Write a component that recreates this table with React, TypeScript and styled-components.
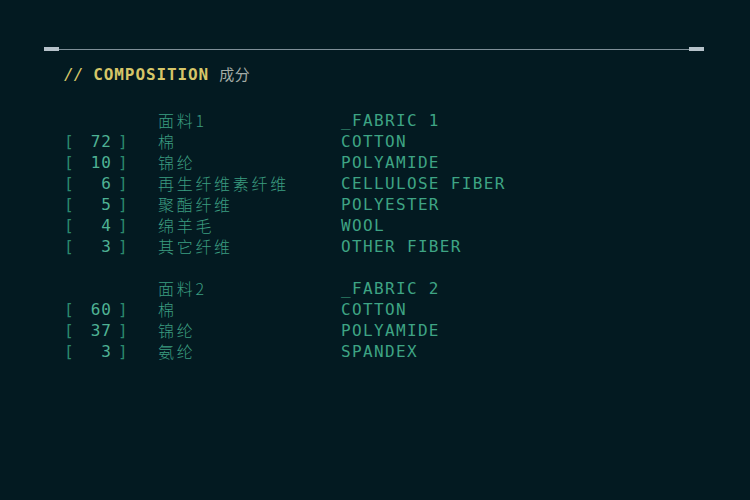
import React from "react";
import styled, { createGlobalStyle } from "styled-components";

const Global = createGlobalStyle`
  html, body { margin: 0; padding: 0; background: #031a21; }
  body { width: 750px; height: 500px; overflow: hidden; }
`;

const Page = styled.div`
  width: 750px;
  height: 500px;
  box-sizing: border-box;
  padding: 47px 46px 0 44px;
  background: #031a21;
`;

const Rule = styled.div`
  display: flex;
  align-items: center;
  height: 4px;
`;

const Cap = styled.div`
  width: 15px;
  height: 4px;
  background: #b6c2ca;
`;

const Line = styled.div`
  flex: 1;
  height: 1px;
  background: #7f8f98;
`;

const Title = styled.div`
  margin-top: 13px;
  padding-left: 20px;
  display: flex;
  align-items: baseline;
  height: 20px;
  line-height: 20px;
  font-family: "DejaVu Sans Mono", monospace;
  font-weight: bold;
  font-size: 16px;
  letter-spacing: 0.9px;
  color: #d6c668;
`;

const Slashes = styled.span`
  margin-right: 10px;
  letter-spacing: 0px;
  font-weight: normal;
  font-style: italic;
`;

const TitleCn = styled.span`
  margin-left: 10px;
  font-family: "Noto Sans CJK SC", sans-serif;
  font-weight: 400;
  font-size: 15px;
  letter-spacing: 0.5px;
  color: #a4aca6;
`;

const Table = styled.div`
  margin-top: 26px;
  padding-left: 20px;
  display: flex;
  flex-direction: column;
  gap: 21px;
`;

const Group = styled.div`
  display: grid;
  grid-template-columns: 94px 183px 1fr;
  grid-auto-rows: 21px;
  align-items: center;
`;

const Pct = styled.div`
  display: flex;
  align-items: center;
  font-family: "DejaVu Sans Mono", monospace;
  font-size: 16px;
  line-height: 21px;
`;

const Bracket = styled.span`
  color: #2b8a6e;
  width: 10px;
`;

const Num = styled.span`
  width: 36px;
  margin-left: 2px;
  margin-right: 6px;
  text-align: right;
  letter-spacing: 1px;
  color: #4fb294;
`;

const Cn = styled.div`
  font-family: "Noto Sans CJK SC", sans-serif;
  font-weight: 300;
  font-size: 16px;
  letter-spacing: 2.7px;
  line-height: 21px;
  height: 21px;
  color: #3b9d80;
`;

const En = styled.div`
  font-family: "DejaVu Sans Mono", monospace;
  font-size: 16px;
  letter-spacing: 1.35px;
  line-height: 21px;
  color: #3ea484;
`;

type Item = { pct: number; cn: string; en: string };
type Fabric = { cn: string; en: string; items: Item[] };

const fabrics: Fabric[] = [
  {
    cn: "面料1",
    en: "_FABRIC 1",
    items: [
      { pct: 72, cn: "棉", en: "COTTON" },
      { pct: 10, cn: "锦纶", en: "POLYAMIDE" },
      { pct: 6, cn: "再生纤维素纤维", en: "CELLULOSE FIBER" },
      { pct: 5, cn: "聚酯纤维", en: "POLYESTER" },
      { pct: 4, cn: "绵羊毛", en: "WOOL" },
      { pct: 3, cn: "其它纤维", en: "OTHER FIBER" },
    ],
  },
  {
    cn: "面料2",
    en: "_FABRIC 2",
    items: [
      { pct: 60, cn: "棉", en: "COTTON" },
      { pct: 37, cn: "锦纶", en: "POLYAMIDE" },
      { pct: 3, cn: "氨纶", en: "SPANDEX" },
    ],
  },
];

export default function App() {
  return (
    <Page>
      <Global />
      <Rule>
        <Cap />
        <Line />
        <Cap />
      </Rule>
      <Title>
        <Slashes>//</Slashes>
        COMPOSITION
        <TitleCn>成分</TitleCn>
      </Title>
      <Table>
        {fabrics.map((f) => (
          <Group key={f.en}>
            <div />
            <Cn>{f.cn}</Cn>
            <En>{f.en}</En>
            {f.items.map((it) => (
              <React.Fragment key={it.en}>
                <Pct>
                  <Bracket>[</Bracket>
                  <Num>{it.pct}</Num>
                  <Bracket>]</Bracket>
                </Pct>
                <Cn>{it.cn}</Cn>
                <En>{it.en}</En>
              </React.Fragment>
            ))}
          </Group>
        ))}
      </Table>
    </Page>
  );
}
